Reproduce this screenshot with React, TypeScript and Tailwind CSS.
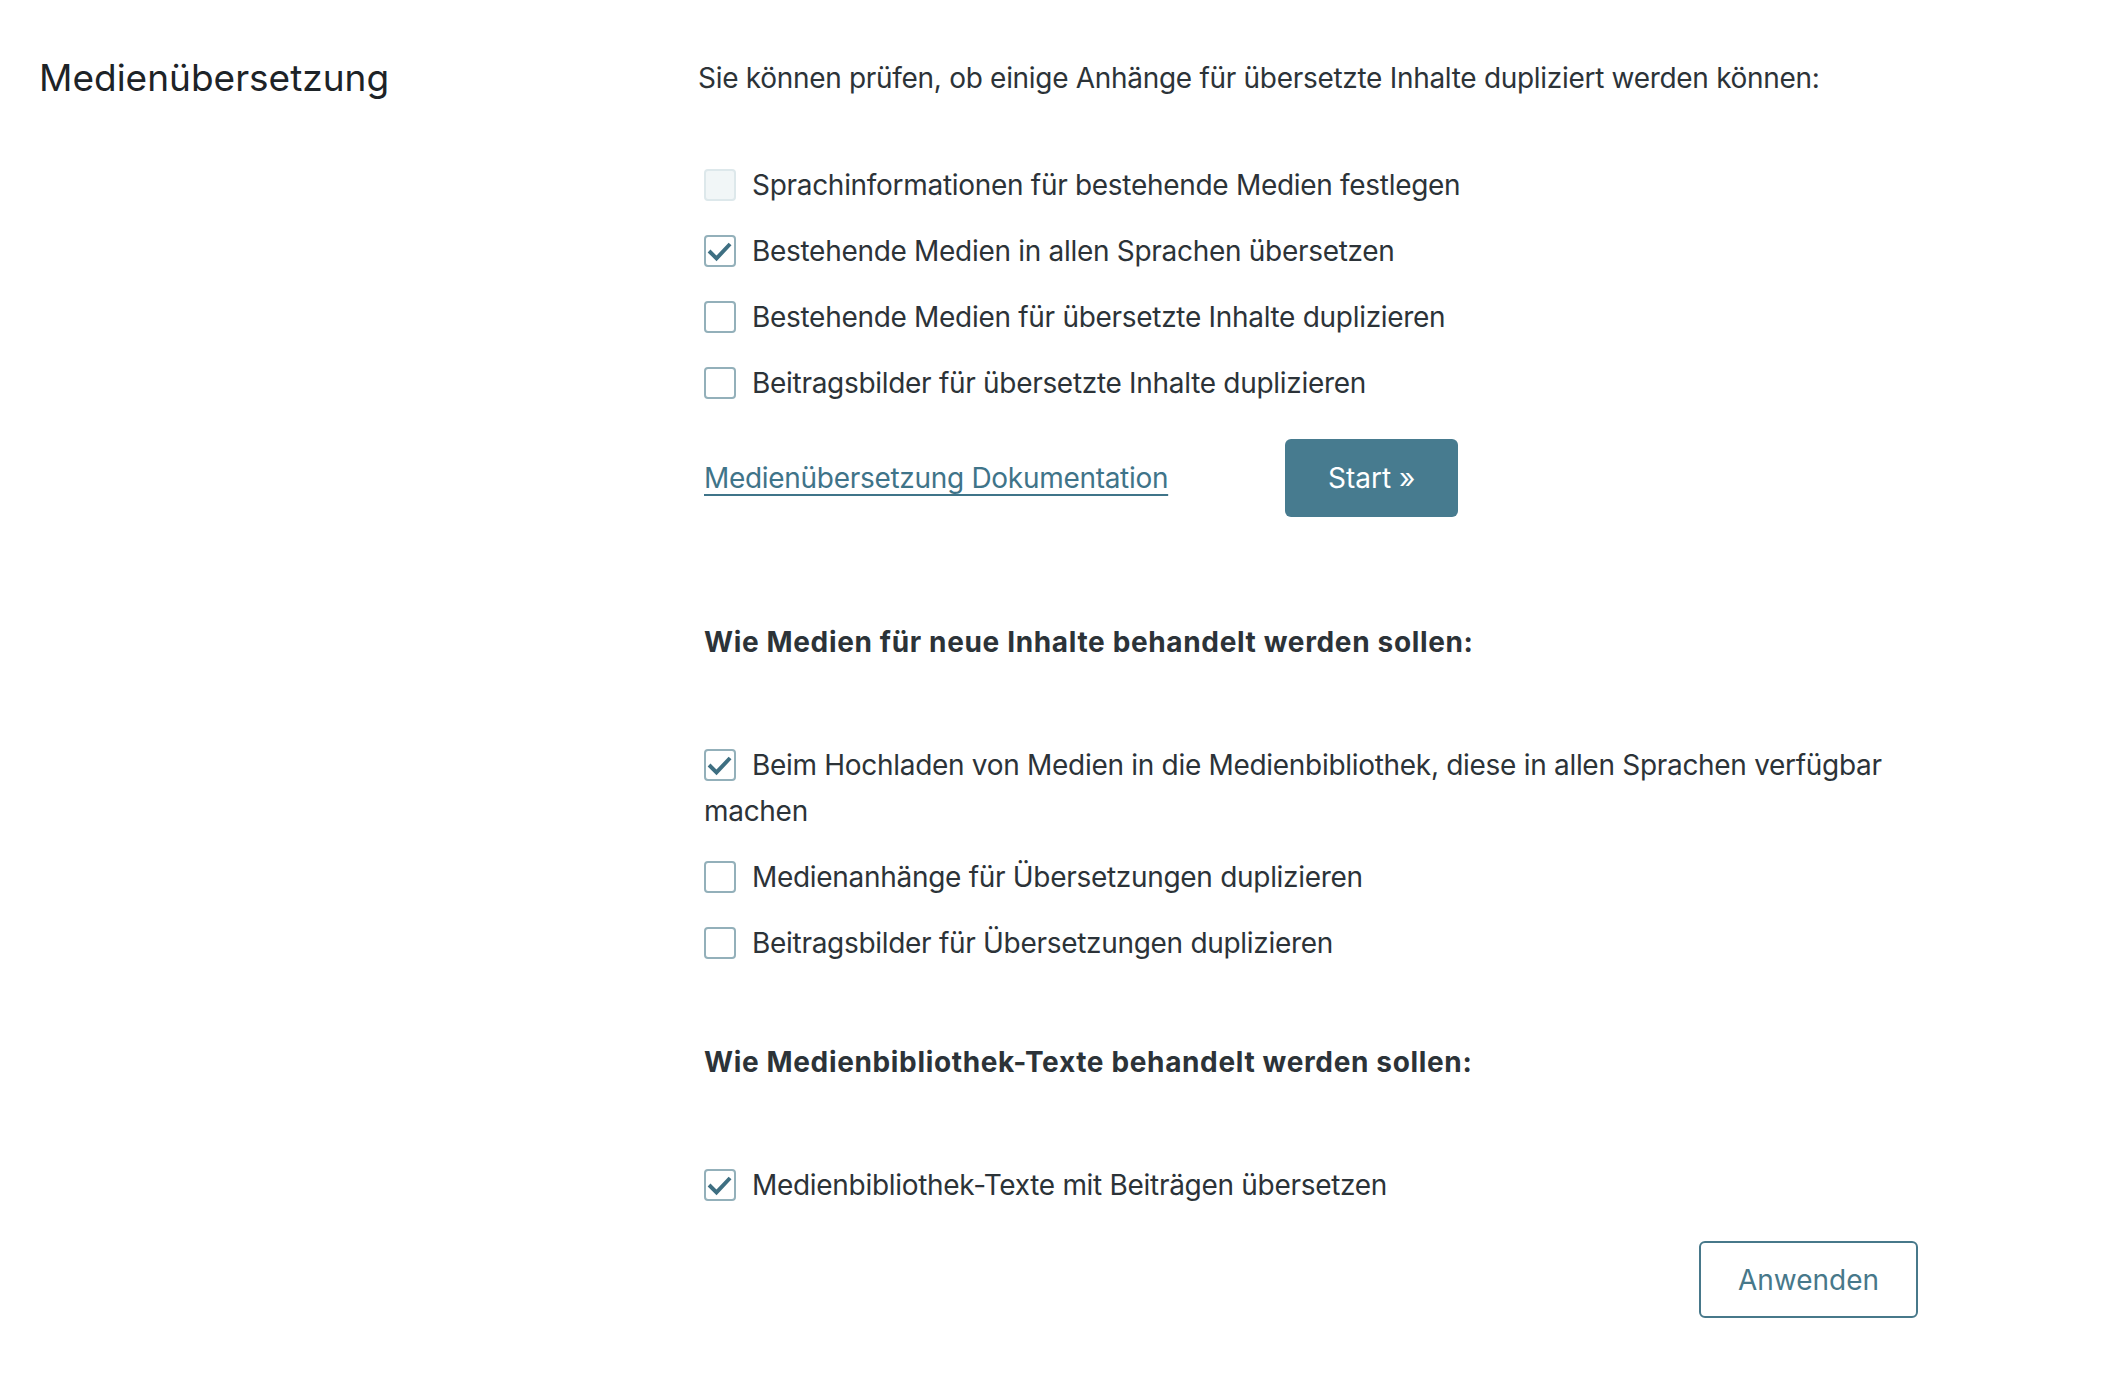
import React, { useState } from 'react';

const font = { fontFamily: 'Inter, "Noto Sans", sans-serif' };

function Box({ checked, disabled }: { checked?: boolean; disabled?: boolean }) {
  return (
    <span
      className={`inline-flex w-[32px] h-[32px] shrink-0 items-center justify-center rounded-[4px] border-2 align-middle mr-[16px] -mt-[4px] ${
        disabled ? 'border-[#dde8eb] bg-[#f1f6f7]' : 'border-[#93b0ba] bg-white'
      }`}
    >
      {checked && (
        <svg viewBox="0 0 32 32" className="w-[30px] h-[30px]">
          <path d="M3.5 16 L12 24.5 L27.5 8" fill="none" stroke="#3e6f82" strokeWidth="4.5" />
        </svg>
      )}
    </span>
  );
}

function Option({ label, checked, disabled }: { label: string; checked?: boolean; disabled?: boolean }) {
  const [on, setOn] = useState(!!checked);
  return (
    <label
      className="block text-[28px] leading-[46px] tracking-[-0.3px] text-[#2c3338] cursor-pointer"
      onClick={(e) => {
        e.preventDefault();
        if (!disabled) setOn(!on);
      }}
    >
      <Box checked={on} disabled={disabled} />
      {label}
    </label>
  );
}

export default function App() {
  return (
    <div className="min-h-screen bg-white flex" style={font}>
      <div className="w-[698px] shrink-0 pl-[39px] pt-[55px]">
        <h2 className="text-[37px] leading-[46px] text-[#1d2327]">Medienübersetzung</h2>
      </div>

      <div className="w-[1220px] pt-[55px]">
        <p className="text-[28px] leading-[46px] tracking-[-0.3px] text-[#2c3338]">
          Sie können prüfen, ob einige Anhänge für übersetzte Inhalte dupliziert werden können:
        </p>

        <div className="ml-[6px]">
          <div className="mt-[61px] flex flex-col gap-[20px]">
            <Option label="Sprachinformationen für bestehende Medien festlegen" disabled />
            <Option label="Bestehende Medien in allen Sprachen übersetzen" checked />
            <Option label="Bestehende Medien für übersetzte Inhalte duplizieren" />
            <Option label="Beitragsbilder für übersetzte Inhalte duplizieren" />
          </div>

          <div className="mt-[33px] flex items-center">
            <a
              href="#"
              className="text-[28px] leading-[46px] tracking-[-0.3px] text-[#3f7489] underline underline-offset-[6px] decoration-[2px]"
            >
              Medienübersetzung Dokumentation
            </a>
            <button className="ml-[117px] w-[173px] h-[78px] rounded-[6px] bg-[#477b8f] text-white text-[28px]">
              Start »
            </button>
          </div>

          <h3 className="mt-[102px] text-[28px] leading-[46px] tracking-[0.65px] font-bold text-[#2c3338]">
            Wie Medien für neue Inhalte behandelt werden sollen:
          </h3>

          <div className="mt-[77px] flex flex-col gap-[20px]">
            <Option label="Beim Hochladen von Medien in die Medienbibliothek, diese in allen Sprachen verfügbar machen" checked />
            <Option label="Medienanhänge für Übersetzungen duplizieren" />
            <Option label="Beitragsbilder für Übersetzungen duplizieren" />
          </div>

          <h3 className="mt-[73px] text-[28px] leading-[46px] tracking-[0.65px] font-bold text-[#2c3338]">
            Wie Medienbibliothek-Texte behandelt werden sollen:
          </h3>

          <div className="mt-[77px]">
            <Option label="Medienbibliothek-Texte mit Beiträgen übersetzen" checked />
          </div>

          <div className="mt-[33px] flex justify-end">
            <button className="w-[219px] h-[77px] rounded-[6px] border-2 border-[#47788a] bg-white text-[#47788a] text-[28px]">
              Anwenden
            </button>
          </div>
        </div>
      </div>
    </div>
  );
}
